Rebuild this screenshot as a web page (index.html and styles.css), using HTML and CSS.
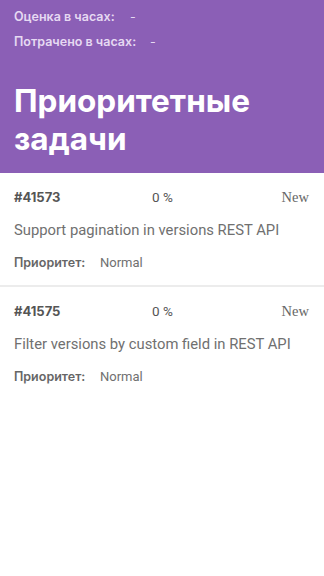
FILE: index.html
```html
<!DOCTYPE html>
<html lang="ru">
<head>
<meta charset="utf-8">
<link rel="stylesheet" href="styles.css">
</head>
<body>
<header class="head">
  <div class="meta">
    <div class="meta-row"><span class="meta-label">Оценка в часах:</span><span class="meta-val">-</span></div>
    <div class="meta-row"><span class="meta-label meta-label-wide">Потрачено в часах:</span><span class="meta-val">-</span></div>
  </div>
  <h1 class="title">Приоритетные задачи</h1>
</header>
<main class="list">
  <section class="card">
    <div class="top">
      <span class="id">#41573</span>
      <span class="pct">0 %</span>
      <span class="status">New</span>
    </div>
    <div class="subject">Support pagination in versions REST API</div>
    <div class="prio"><span class="prio-label">Приоритет:</span><span class="prio-val">Normal</span></div>
  </section>
  <section class="card">
    <div class="top">
      <span class="id">#41575</span>
      <span class="pct">0 %</span>
      <span class="status">New</span>
    </div>
    <div class="subject">Filter versions by custom field in REST API</div>
    <div class="prio"><span class="prio-label">Приоритет:</span><span class="prio-val">Normal</span></div>
  </section>
</main>
</body>
</html>
```
FILE: styles.css
```css
* { box-sizing: border-box; }
html, body { margin: 0; padding: 0; background: #fff; }
body { font-family: "Inter", "Noto Sans", sans-serif; width: 324px; }
.head {
  background: #8b5fb6;
  padding: 8px 14px 15px;
}
.meta { display: flex; flex-direction: column; gap: 7px; }
.meta-row { display: flex; align-items: center; font-size: 12.5px; line-height: 18px; color: #e6d9f2; }
.meta-label { font-weight: 600; width: 116px; }
.meta-label-wide { width: 136px; }
.meta-val { font-weight: 400; }
.title {
  margin: 31px 0 0;
  font-size: 31.5px;
  line-height: 38px;
  font-weight: 700;
  color: #fff;
}
.card {
  padding: 14px 15px 13px 14px;
  border-bottom: 2px solid #ececec;
}
.card:last-child { border-bottom: none; }
.top { display: flex; align-items: center; font-size: 13px; line-height: 20px; color: #555; }
.id { font-family: "Inter", sans-serif; font-weight: 700; width: 138px; color: #555; }
.pct { flex: 1; font-family: "Roboto", sans-serif; font-size: 13.5px; color: #555; }
.status { font-family: "Liberation Serif", serif; font-size: 14.5px; color: #666; }
.subject { margin-top: 13px; font-family: "Roboto", sans-serif; font-size: 14.8px; line-height: 20px; color: #707070; }
.prio { margin-top: 14px; display: flex; font-size: 12.5px; line-height: 18px; color: #666; }
.prio-label { font-weight: 600; width: 86px; }
.prio-val { font-family: "Roboto", sans-serif; font-size: 13px; color: #707070; }
```
